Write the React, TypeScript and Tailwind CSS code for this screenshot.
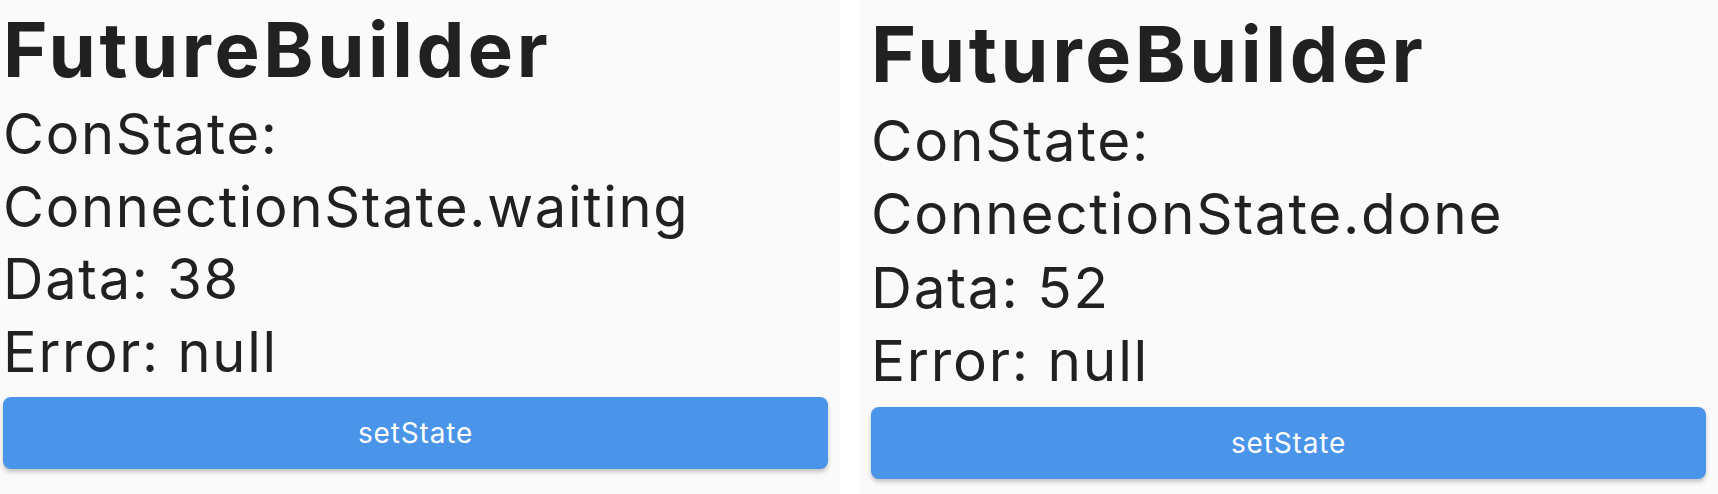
type PanelProps = {
  conState: string;
  data: number;
  wrap: string;
  title: string;
  line: string;
  button: string;
};

const Panel = ({ conState, data, wrap, title, line, button }: PanelProps) => {
  return (
    <div className={wrap}>
      <h1 className={title}>FutureBuilder</h1>
      <p className={line}>ConState:</p>
      <p className={line}>{conState}</p>
      <p className={line}>Data: {data}</p>
      <p className={line}>Error: null</p>
      <button type="button" className={button}>
        setState
      </button>
    </div>
  );
};

export default function App() {
  return (
    <main
      className="flex h-[494px] w-[1718px] gap-[20px] overflow-hidden bg-white text-[#212121]"
      style={{ fontFamily: "Inter, Roboto, sans-serif" }}
    >
      <Panel
        conState="ConnectionState.waiting"
        data={38}
        wrap="flex h-full w-[840px] shrink-0 flex-col bg-[#fafafa] pl-[3px]"
        title="text-[76px] font-bold leading-[98px] tracking-[0.047em]"
        line="text-[56px] leading-[72.5px] tracking-[0.031em]"
        button="mt-[9px] h-[72px] w-[825px] rounded-[8px] bg-[#4a94ea] text-[28px] tracking-[0.03em] text-white shadow-[0_3px_4px_rgba(0,0,0,0.22)]"
      />
      <Panel
        conState="ConnectionState.done"
        data={52}
        wrap="flex h-full flex-1 flex-col bg-[#fafafa] pl-[11px] pt-[5px]"
        title="text-[77px] font-bold leading-[99px] tracking-[0.047em]"
        line="text-[56.7px] leading-[73.4px] tracking-[0.031em]"
        button="mt-[9px] h-[72px] w-[835px] rounded-[8px] bg-[#4a94ea] text-[28px] tracking-[0.03em] text-white shadow-[0_3px_4px_rgba(0,0,0,0.22)]"
      />
    </main>
  );
}
